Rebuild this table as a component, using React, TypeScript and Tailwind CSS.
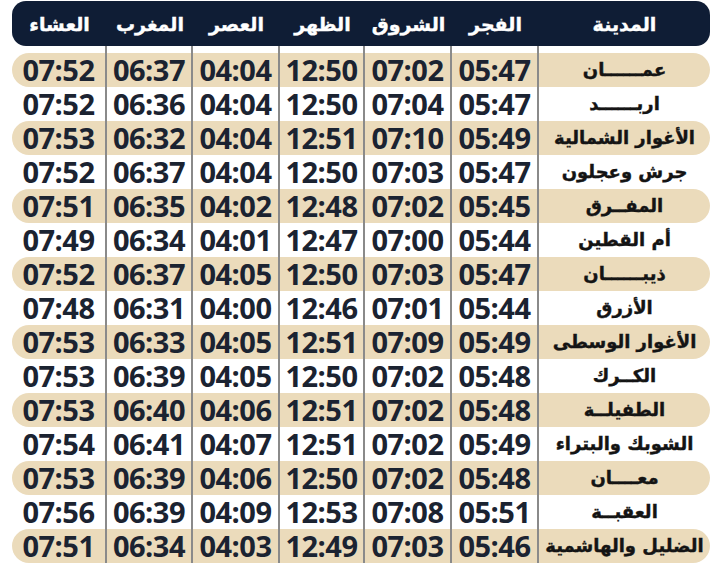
import React from "react";

const headers = ["العشاء", "المغرب", "العصر", "الظهر", "الشروق", "الفجر", "المدينة"];

// each row: isha, maghrib, asr, dhuhr, shurooq, fajr, city
const rows: string[][] = [
  ["07:52", "06:37", "04:04", "12:50", "07:02", "05:47", "عمــــــان"],
  ["07:52", "06:36", "04:04", "12:50", "07:04", "05:47", "اربــــــد"],
  ["07:53", "06:32", "04:04", "12:51", "07:10", "05:49", "الأغوار الشمالية"],
  ["07:52", "06:37", "04:04", "12:50", "07:03", "05:47", "جرش وعجلون"],
  ["07:51", "06:35", "04:02", "12:48", "07:02", "05:45", "المفــرق"],
  ["07:49", "06:34", "04:01", "12:47", "07:00", "05:44", "أم القطين"],
  ["07:52", "06:37", "04:05", "12:50", "07:03", "05:47", "ذيبــــــان"],
  ["07:48", "06:31", "04:00", "12:46", "07:01", "05:44", "الأزرق"],
  ["07:53", "06:33", "04:05", "12:51", "07:09", "05:49", "الأغوار الوسطى"],
  ["07:53", "06:39", "04:05", "12:50", "07:02", "05:48", "الكــرك"],
  ["07:53", "06:40", "04:06", "12:51", "07:02", "05:48", "الطفيلــة"],
  ["07:54", "06:41", "04:07", "12:51", "07:02", "05:49", "الشوبك والبتراء"],
  ["07:53", "06:39", "04:06", "12:50", "07:02", "05:48", "معــــان"],
  ["07:56", "06:39", "04:09", "12:53", "07:08", "05:51", "العقبــة"],
  ["07:51", "06:34", "04:03", "12:49", "07:03", "05:46", "الضليل والهاشمية"],
];

const cols = "grid grid-cols-[95px_86px_87px_85px_87px_87px_1fr]";
const arabic = "font-['DejaVu_Sans',sans-serif]";
const digits = "font-['Open_Sans',sans-serif]";

export default function App() {
  return (
    <div className="w-[720px] h-[564px] overflow-hidden bg-white">
      <div className="ml-[12px] w-[698px]">
        {/* header bar */}
        <div className={`${cols} h-[45px] mt-[1px] items-center rounded-[14px] bg-[#0f1d35] text-white`}>
          {headers.map((h) => (
            <div
              key={h}
              dir="rtl"
              className={`${arabic} text-center text-[19px] leading-[24px] font-bold [-webkit-text-stroke:0.4px_white]`}
            >
              {h}
            </div>
          ))}
        </div>

        {/* spacer with column rules */}
        <div className={`${cols} h-[7px]`}>
          {headers.map((h, i) => (
            <div key={h} className={i < 6 ? "border-r-2 border-[#8a8a8a]" : ""} />
          ))}
        </div>

        {rows.map((r, ri) => (
          <div
            key={ri}
            className={`${cols} h-[34px] rounded-full ${ri % 2 === 0 ? "bg-[#ebdbbb]" : "bg-white"}`}
          >
            {r.map((c, ci) =>
              ci < 6 ? (
                <div
                  key={ci}
                  className={`${digits} flex items-center justify-center border-r-2 border-[#8a8a8a] text-[29px] leading-[30px] font-bold tracking-[-0.5px] text-[#1b2331]`}
                >
                  {c}
                </div>
              ) : (
                <div
                  key={ci}
                  dir="rtl"
                  className={`${arabic} flex items-center justify-center text-[18px] leading-[24px] font-bold text-[#141414] [-webkit-text-stroke:0.4px_#141414]`}
                >
                  {c}
                </div>
              )
            )}
          </div>
        ))}
      </div>
    </div>
  );
}
